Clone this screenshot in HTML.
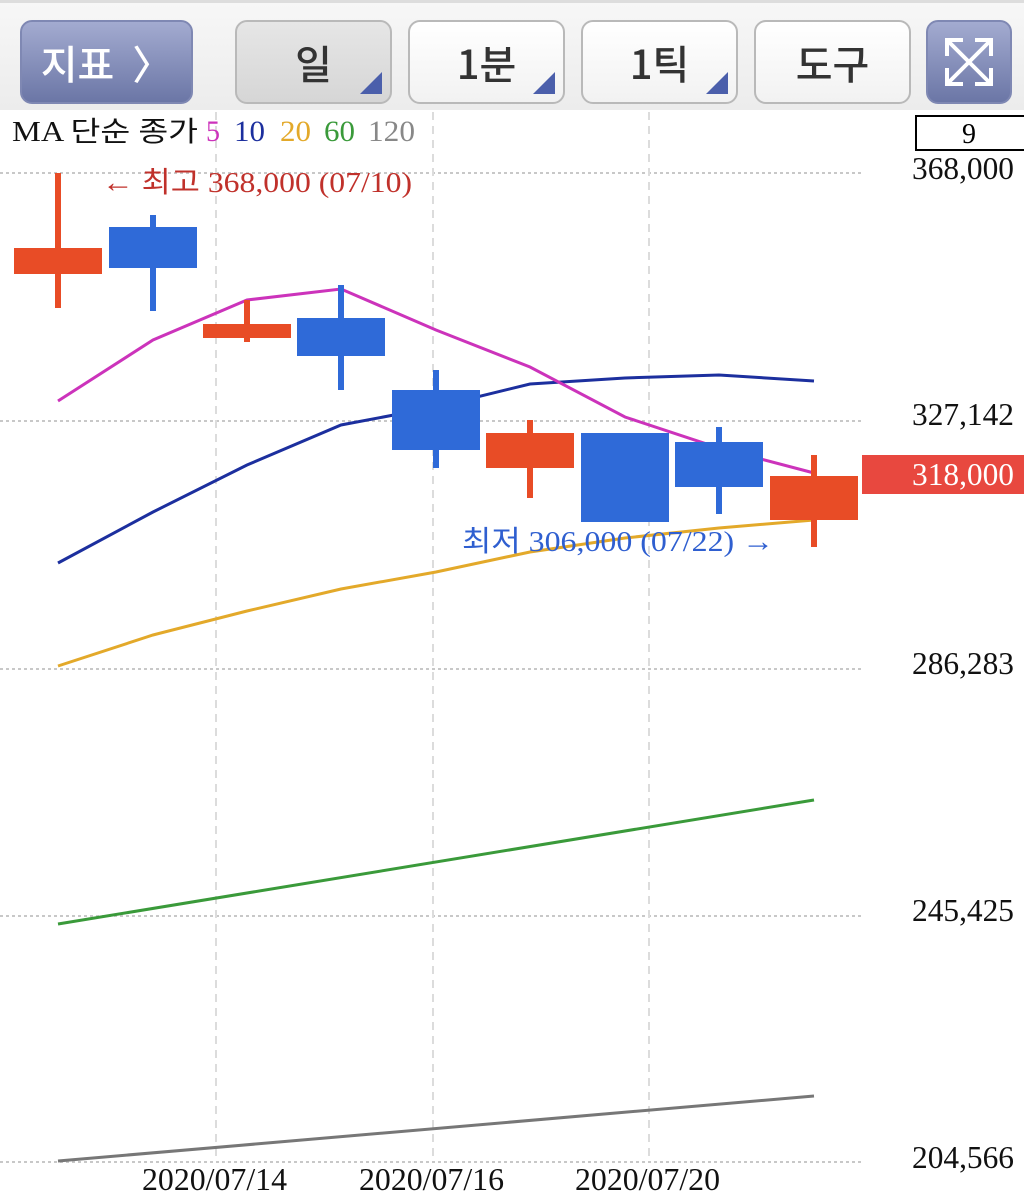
<!DOCTYPE html>
<html><head><meta charset="utf-8"><style>
html,body{margin:0;padding:0;width:1024px;height:1194px;overflow:hidden;background:#fff;font-family:"Liberation Sans","Noto Sans CJK KR",sans-serif}
.bar{position:absolute;left:0;top:0;width:1024px;height:110px;background:linear-gradient(#f7f7f7,#ececec);border-top:3px solid #ddd;box-sizing:border-box}
.b{position:absolute;top:17px;height:84px;border-radius:12px;box-sizing:border-box;border:2px solid #b9b9b9;background:linear-gradient(#fff,#f2f2f2);font-size:40px;font-weight:500;color:#333;display:flex;align-items:center;justify-content:center;font-family:"Noto Sans CJK KR",sans-serif}
.tri{position:absolute;right:8px;bottom:8px;width:0;height:0;border-left:22px solid transparent;border-bottom:22px solid #4b5fab}
</style></head><body>
<div class="bar">
<div class="b" style="left:20px;width:173px;background:linear-gradient(#a3abd0,#6b76a6);border-color:#7f88b3;color:#fff;">지표 &nbsp;〉</div>
<div class="b" style="left:235px;width:157px;background:linear-gradient(#e6e6e6,#d6d6d6)">일<div class="tri"></div></div>
<div class="b" style="left:408px;width:157px">1분<div class="tri"></div></div>
<div class="b" style="left:581px;width:157px">1틱<div class="tri"></div></div>
<div class="b" style="left:754px;width:157px">도구</div>
<div class="b" style="left:926px;width:86px;background:linear-gradient(#a3abd0,#6b76a6);border-color:#7f88b3">
<svg width="60" height="60" viewBox="0 0 60 60" stroke="#fff" stroke-width="4" fill="none"><path d="M8 8L52 52M52 8L8 52M8 24V8H24M36 8H52V24M8 36V52H24M36 52H52V36"/></svg></div>
</div>
<svg style="position:absolute;left:0;top:0" width="1024" height="1194" font-family="Liberation Serif,'Noto Serif CJK SC',serif">
<g stroke="#c8c8c8" stroke-width="2" stroke-dasharray="3,3">
<line x1="0" y1="173" x2="862" y2="173"/><line x1="0" y1="421" x2="862" y2="421"/><line x1="0" y1="669" x2="862" y2="669"/><line x1="0" y1="916" x2="862" y2="916"/><line x1="0" y1="1162" x2="862" y2="1162"/>
</g>
<g stroke="#dcdcdc" stroke-width="2" stroke-dasharray="8,6">
<line x1="216" y1="112" x2="216" y2="1162"/><line x1="433" y1="112" x2="433" y2="1162"/><line x1="649" y1="112" x2="649" y2="1162"/>
</g>
<g font-size="30" fill="#111" lengthAdjust="spacingAndGlyphs">
<text x="12" y="141" font-size="28" textLength="186" lengthAdjust="spacingAndGlyphs" font-family="Liberation Serif,'Noto Sans CJK KR',serif">MA 단순 종가</text>
<text x="206" y="141" fill="#cc33bb" textLength="14" lengthAdjust="spacingAndGlyphs">5</text><text x="234" y="141" fill="#1c2f9e" textLength="31" lengthAdjust="spacingAndGlyphs">10</text><text x="280" y="141" fill="#e3a92a" textLength="31" lengthAdjust="spacingAndGlyphs">20</text><text x="324" y="141" fill="#3a9a3a" textLength="31" lengthAdjust="spacingAndGlyphs">60</text><text x="368" y="141" fill="#888" textLength="47" lengthAdjust="spacingAndGlyphs">120</text>
</g>
<rect x="916" y="116" width="110" height="34" fill="#fff" stroke="#000" stroke-width="2"/>
<text x="969" y="143" font-size="28" text-anchor="middle">9</text>
<g font-size="32" fill="#111">
<text x="912" y="179" textLength="102" lengthAdjust="spacingAndGlyphs">368,000</text>
<text x="912" y="425" textLength="102" lengthAdjust="spacingAndGlyphs">327,142</text>
<text x="912" y="674" textLength="102" lengthAdjust="spacingAndGlyphs">286,283</text>
<text x="912" y="921" textLength="102" lengthAdjust="spacingAndGlyphs">245,425</text>
<text x="912" y="1168" textLength="102" lengthAdjust="spacingAndGlyphs">204,566</text>
<text x="142" y="1190" textLength="145" lengthAdjust="spacingAndGlyphs">2020/07/14</text>
<text x="359" y="1190" textLength="145" lengthAdjust="spacingAndGlyphs">2020/07/16</text>
<text x="575" y="1190" textLength="145" lengthAdjust="spacingAndGlyphs">2020/07/20</text>
</g>
<rect x="862" y="455" width="162" height="39" fill="#e8483f"/>
<text x="912" y="485" font-size="32" fill="#fff" textLength="102" lengthAdjust="spacingAndGlyphs">318,000</text>
<g fill="none" stroke-width="3">
<polyline stroke="#777" points="58,1161 814,1096"/>
<polyline stroke="#3a9a3a" points="58,924 814,800"/>
<polyline stroke="#e3a92a" points="58,666 153,635 247,611 341,589 436,572 530,552 625,538 719,528 814,520"/>
<polyline stroke="#1c2f9e" points="58,563 153,512 247,465 341,425 436,407 530,384 625,378 719,375 814,381"/>
<polyline stroke="#cc33bb" points="58,401 153,340 247,300 341,289 436,330 530,367 625,417 719,448 814,473"/>
</g>
<g fill="#e84c26">
<rect x="55" y="173" width="6" height="135"/><rect x="14" y="248" width="88" height="26"/>
<rect x="244" y="300" width="6" height="42"/><rect x="203" y="324" width="88" height="14"/>
<rect x="527" y="420" width="6" height="78"/><rect x="486" y="433" width="88" height="35"/>
<rect x="811" y="455" width="6" height="92"/><rect x="770" y="476" width="88" height="44"/>
</g>
<g fill="#2f6ad8">
<rect x="150" y="215" width="6" height="96"/><rect x="109" y="227" width="88" height="41"/>
<rect x="338" y="285" width="6" height="105"/><rect x="297" y="318" width="88" height="38"/>
<rect x="433" y="370" width="6" height="98"/><rect x="392" y="390" width="88" height="60"/>
<rect x="581" y="433" width="88" height="89"/>
<rect x="716" y="427" width="6" height="87"/><rect x="675" y="442" width="88" height="45"/>
</g>
<text x="102" y="192" font-size="29" fill="#c0312b" font-family="Liberation Serif,'Noto Sans CJK KR',serif" textLength="310" lengthAdjust="spacingAndGlyphs">← 최고 368,000 (07/10)</text>
<text x="462" y="551" font-size="29" fill="#2f5fd0" font-family="Liberation Serif,'Noto Sans CJK KR',serif" textLength="312" lengthAdjust="spacingAndGlyphs">최저 306,000 (07/22) →</text>
</svg>
</body></html>
